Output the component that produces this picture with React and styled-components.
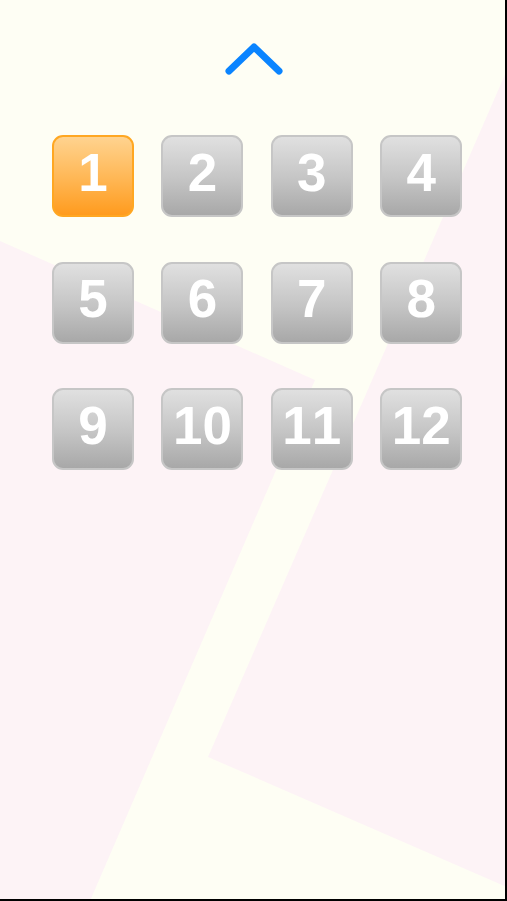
import React, { useState } from 'react';
import styled, { createGlobalStyle } from 'styled-components';

const GlobalStyle = createGlobalStyle`
  html, body {
    margin: 0;
    padding: 0;
  }
  body {
    font-family: "Liberation Sans", Arial, sans-serif;
  }
`;

// Styled components
const Screen = styled.div`
  position: relative;
  box-sizing: border-box;
  width: 507px;
  height: 901px;
  overflow: hidden;
  background-color: #fefef4;
  border-right: 2px solid #000;
  border-bottom: 2px solid #000;
`;

const Backdrop = styled.svg`
  position: absolute;
  inset: 0;
  z-index: 0;
`;

const Content = styled.div`
  position: relative;
  z-index: 1;
  display: flex;
  flex-direction: column;
`;

const Header = styled.div`
  display: flex;
  justify-content: center;
  padding-top: 42px;
  padding-left: 2px;
`;

const UpButton = styled.button`
  display: flex;
  padding: 0;
  border: none;
  background: none;
  cursor: pointer;
`;

const LevelGrid = styled.div`
  display: grid;
  grid-template-columns: repeat(4, 82px);
  column-gap: 27.4px;
  row-gap: 44.5px;
  margin-top: 59px;
  margin-left: 52px;
`;

const Level = styled.button`
  box-sizing: border-box;
  width: 82px;
  height: 82px;
  display: flex;
  align-items: center;
  justify-content: center;
  padding: 0 0 8px;
  border-radius: 11px;
  border: 2px solid ${(p) => (p.$active ? '#ffa722' : '#c6c6c6')};
  background: ${(p) =>
    p.$active
      ? 'linear-gradient(to bottom, #ffd38f 0%, #ffb653 55%, #ff9b1e 100%)'
      : 'linear-gradient(to bottom, #e0e0e0 0%, #c4c4c4 55%, #a8a8a8 100%)'};
  color: #fff;
  font-family: "Liberation Sans", Arial, sans-serif;
  font-weight: bold;
  font-size: 53px;
  font-kerning: none;
  cursor: pointer;
`;

const levels = Array.from({ length: 12 }, (_, i) => i + 1);

const App = () => {
  const [current, setCurrent] = useState(1);

  return (
    <>
      <GlobalStyle />
      <Screen>
        {/* pink background shapes */}
        <Backdrop width="507" height="901" viewBox="0 0 507 901">
          <polygon points="0,241 315,380 90,901 0,901" fill="#fdf3f6" />
          <polygon points="507,70 208,757 507,887" fill="#fdf3f6" />
        </Backdrop>

        <Content>
          <Header>
            <UpButton aria-label="up">
              <svg width="60" height="34" viewBox="0 0 60 34">
                <path
                  d="M5 29 L30 5 L55 29"
                  fill="none"
                  stroke="#0a84ff"
                  strokeWidth="7"
                  strokeLinecap="round"
                  strokeLinejoin="round"
                />
              </svg>
            </UpButton>
          </Header>

          <LevelGrid>
            {levels.map((n) => (
              <Level key={n} $active={n === current} onClick={() => setCurrent(n)}>
                {n}
              </Level>
            ))}
          </LevelGrid>
        </Content>
      </Screen>
    </>
  );
};

export default App;
